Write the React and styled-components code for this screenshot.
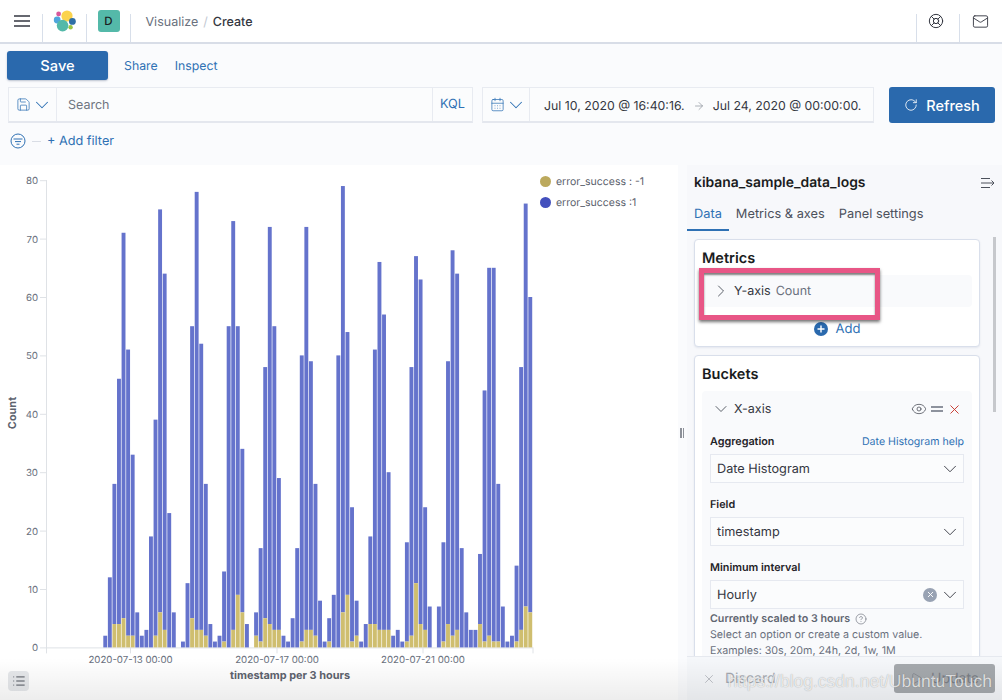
import React from 'react';
import styled, { createGlobalStyle } from 'styled-components';
import {
  ArrowRight, CalendarDays, ChevronDown, ChevronRight, CircleHelp, Eye, LifeBuoy, List, Mail, Play, RotateCw, Save, X,
} from 'lucide-react';

const GlobalStyle = createGlobalStyle`
  html, body {
    margin: 0;
    padding: 0;
    overflow: hidden;
    background: #fff;
    font-family: Inter, "Noto Sans", sans-serif;
    color: #343741;
    text-rendering: geometricPrecision;
  }
  * { box-sizing: border-box; }
`;

const blue = '#2f71b4';

const totals = [
  2, 12, 28, 46, 71, 51, 33, 6, 2, 3, 19, 39, 75, 64, 23, 6, 0, 1, 11, 55,
  78, 52, 28, 4, 1, 2, 13, 55, 73, 55, 34, 4, 0, 6, 17, 48, 72, 55, 29, 2,
  1, 5, 17, 50, 72, 49, 28, 8, 1, 5, 9, 50, 79, 54, 24, 8, 1, 4, 19, 51,
  66, 57, 30, 2, 3, 1, 18, 48, 67, 63, 24, 7, 0, 7, 18, 49, 68, 64, 17, 6,
  3, 3, 16, 44, 65, 65, 28, 7, 1, 2, 14, 48, 76, 60,
];
const errors = [
  0, 0, 4, 4, 5, 2, 2, 0, 0, 0, 0, 2, 6, 3, 0, 0, 0, 0, 0, 5,
  3, 3, 2, 0, 0, 0, 1, 0, 3, 9, 6, 0, 0, 2, 1, 5, 4, 3, 3, 0,
  0, 0, 0, 1, 3, 3, 2, 0, 0, 1, 0, 0, 6, 9, 1, 2, 0, 0, 4, 4,
  3, 3, 3, 0, 0, 0, 1, 2, 11, 4, 3, 0, 0, 0, 1, 4, 2, 3, 0, 0,
  0, 0, 4, 1, 2, 1, 1, 0, 0, 0, 1, 3, 7, 6,
];

const ZERO_Y = 482.4;
const UNIT = 5.84;
const BAR_LEFT = 103.3;
const BAR_STEP = 4.57;

const Page = styled.div`
  position: relative;
  width: 1002px;
  height: 700px;
  overflow: hidden;
  display: flex;
  flex-direction: column;
`;

const Header = styled.header`
  height: 44px;
  flex: none;
  display: flex;
  background: #fff;
  border-bottom: 2px solid #d8dde7;
`;

const HeaderCell = styled.div`
  width: ${(p) => p.$width}px;
  flex: none;
  display: flex;
  align-items: center;
  justify-content: center;
  padding-right: ${(p) => p.$inset || 0}px;
  color: #343741;
  position: relative;
  &::after {
    content: '';
    position: absolute;
    ${(p) => (p.$left ? 'left: 0;' : 'right: 0;')}
    top: 14px;
    bottom: 0;
    width: 1px;
    background: #d8dfea;
  }
`;

const Breadcrumbs = styled.nav`
  flex: 1;
  display: flex;
  align-items: center;
  gap: 5px;
  padding: 2px 0 0 15px;
  font-size: 12.5px;
  color: #69707d;
  span:last-child { color: #343741; font-weight: 500; }
  i { color: #c2c8d2; font-style: normal; }
`;

const Avatar = styled.div`
  width: 22px;
  height: 22px;
  border-radius: 3px;
  background: #54b9a9;
  color: #1a1c21;
  font-size: 11.5px;
  font-weight: 500;
  display: grid;
  place-items: center;
`;

const TopBar = styled.section`
  height: 121px;
  flex: none;
  background: #fafbfd;
  padding: 7px 7px 0;
`;

const ActionRow = styled.div`
  display: flex;
  align-items: center;
  height: 29px;
`;

const SaveButton = styled.button`
  width: 101px;
  height: 29px;
  border: 0;
  border-radius: 3px;
  background: #2a69ad;
  color: #fff;
  font: 500 14.7px Inter, sans-serif;
  box-shadow: 0 1px 2px rgba(40, 60, 100, .3);
`;

const TextLink = styled.a`
  color: ${blue};
  font-size: 12.3px;
  margin: 0 0 0 ${(p) => p.$gap}px;
`;

const SearchRow = styled.div`
  display: flex;
  align-items: center;
  margin: 7px 0 0 1px;
`;

const FieldGroup = styled.div`
  height: 36px;
  width: ${(p) => p.$width}px;
  margin-right: ${(p) => p.$gap}px;
  display: flex;
  background: #fbfcfd;
  border: 1px solid #e8ebf1;
  border-bottom: 2px solid #e4e7ee;
`;

const Addon = styled.div`
  width: ${(p) => p.$width}px;
  flex: none;
  display: flex;
  align-items: center;
  justify-content: center;
  padding-left: ${(p) => p.$inset || 0}px;
  color: ${blue};
  font-size: 12.7px;
  border-${(p) => p.$side || 'right'}: 1px solid #e8ebf1;
`;

const SearchText = styled.div`
  flex: 1;
  display: flex;
  align-items: center;
  padding: 2px 0 0 11px;
  font-size: 12.5px;
  color: #6f7580;
`;

const DateRange = styled.div`
  flex: 1;
  display: flex;
  align-items: center;
  padding: 2px 0 0 14px;
  font-size: 12.3px;
  color: #343741;
  white-space: nowrap;
  svg { margin: 0 8px; color: #8a8f98; }
`;

const RefreshButton = styled.button`
  width: 106px;
  height: 36px;
  border: 0;
  border-radius: 3px;
  background: #2a69ad;
  color: #fff;
  font: 500 14.5px Inter, sans-serif;
  display: flex;
  align-items: center;
  justify-content: center;
  gap: 8px;
`;

const FilterRow = styled.div`
  display: flex;
  align-items: center;
  height: 20px;
  margin: 8px 0 0 3px;
  color: ${blue};
  font-size: 12.7px;
  i { width: 9px; height: 1px; background: #d9dde5; margin: 0 6px 0 6px; }
`;

const Main = styled.main`
  flex: 1;
  display: flex;
  min-height: 0;
`;

const ChartPane = styled.div`
  position: relative;
  width: 678px;
  flex: none;
  background: #fff;
  svg { display: block; }
  text { font-family: Inter, sans-serif; fill: #69707d; font-size: 9.700px; }
  text.title { font-size: 10.900px; font-weight: 700; fill: #5d636e; }
`;

const Legend = styled.ul`
  position: absolute;
  left: 540px;
  top: 6px;
  margin: 0;
  padding: 0;
  list-style: none;
  font-size: 10.500px;
  color: #5b616c;
  li { display: flex; align-items: center; height: 21px; gap: 5px; }
`;

const Dot = styled.span`
  width: 11px;
  height: 11px;
  border-radius: 50%;
  background: ${(p) => p.$color};
`;

const ListToggle = styled.div`
  position: absolute;
  left: 8px;
  bottom: 9px;
  width: 21px;
  height: 20px;
  border-radius: 4px;
  background: #e6e8eb;
  color: #454a54;
  display: grid;
  place-items: center;
`;

const ResizeHandle = styled.div`
  width: 9px;
  flex: none;
  background: #fafbfd;
  display: flex;
  align-items: center;
  gap: 1px;
  padding-left: 2px;
  i { width: 1.500px; height: 10px; background: #8d9199; }
`;

const SidePanel = styled.aside`
  position: relative;
  flex: 1;
  min-width: 0;
  background: #f7f8fb;
  display: flex;
  flex-direction: column;
`;

const PanelTitle = styled.div`
  height: 33px;
  flex: none;
  display: flex;
  align-items: center;
  justify-content: space-between;
  padding: 2px 7px 0;
  font-size: 13.900px;
  font-weight: 600;
  color: #1a1c21;
`;

const Tabs = styled.div`
  flex: none;
  display: flex;
  height: 33px;
`;

const Tab = styled.div`
  height: 33px;
  padding: 9px 7px 0;
  font-size: 12.800px;
  color: ${(p) => (p.$active ? blue : '#4c515b')};
  border-bottom: 2px solid ${(p) => (p.$active ? blue : 'transparent')};
`;

const PanelBody = styled.div`
  flex: 1;
  min-height: 0;
  overflow: hidden;
  padding: 8px 0 0 7px;
`;

const Card = styled.section`
  width: 286px;
  background: #fff;
  border: 1px solid #d9dfeb;
  border-radius: 4px;
  padding: 7px;
  margin-bottom: 8px;
  box-shadow: 0 1px 2px rgba(90, 110, 150, .12);
`;

const CardTitle = styled.h3`
  margin: 0;
  height: 28px;
  font-size: 14.500px;
  font-weight: 600;
  line-height: 24px;
  color: #1a1c21;
`;

const Row = styled.div`
  position: relative;
  background: #f9fafc;
  border-radius: 4px;
  padding: 0 8px;
`;

const RowHead = styled.div`
  height: ${(p) => p.$height}px;
  margin-bottom: ${(p) => p.$after || 0}px;
  display: flex;
  align-items: center;
  font-size: 12.500px;
  color: #4c515b;
  b { font-weight: 400; color: #343741; }
  em { font-style: normal; color: #69707d; margin-left: 5px; }
`;

const RowChevron = styled.span`
  width: 20px;
  margin: 0 3px 0 1px;
  display: grid;
  place-items: center;
  color: #4c515b;
`;

const RowActions = styled.div`
  margin-left: auto;
  display: flex;
  align-items: center;
  gap: 3px;
  padding-right: 2px;
`;

const Highlight = styled.div`
  position: absolute;
  left: -3px;
  top: -7px;
  width: 181px;
  height: 52px;
  border: 5px solid #e85686;
  box-shadow: 0 2px 3px rgba(0, 0, 0, .55), inset 0 2px 2px rgba(0, 0, 0, .5);
`;

const AddRow = styled.div`
  height: 22px;
  margin-top: 10px;
  padding-top: 1px;
  display: flex;
  align-items: center;
  justify-content: center;
  gap: 8px;
  color: ${blue};
  font-size: 13px;
`;

const LabelRow = styled.div`
  height: 18px;
  margin-bottom: 4px;
  display: flex;
  justify-content: space-between;
  align-items: center;
  font-size: 10.800px;
  font-weight: 600;
  color: #1f2228;
  a { color: ${blue}; font-weight: 400; font-size: 10.600px; }
`;

const Select = styled.div`
  height: 29px;
  margin-bottom: 12px;
  display: flex;
  align-items: center;
  padding: 0 2px 0 6px;
  background: #fbfcfd;
  border: 1px solid #e6e9f0;
  font-size: 12.700px;
  color: #343741;
  span { flex: 1; padding-top: 1px; }
`;

const ClearBadge = styled.div`
  width: 14px;
  height: 14px;
  border-radius: 50%;
  background: #98a2b3;
  color: #fff;
  display: grid;
  place-items: center;
  margin-right: 2px;
`;

const Helper = styled.div`
  margin-top: -10px;
  font-size: 10.700px;
  line-height: 16px;
  color: #69707d;
  white-space: nowrap;
  strong { display: flex; align-items: center; gap: 5px; font-weight: 600; color: #5f6570; }
`;

const BottomBar = styled.footer`
  height: 44px;
  flex: none;
  background: #f5f7fa;
  border-top: 1px solid #e6e9ef;
  display: flex;
  align-items: center;
  justify-content: space-between;
  padding: 0 7px 0 15px;
`;

const Discard = styled.div`
  display: flex;
  align-items: center;
  gap: 9px;
  font-size: 14px;
  color: #a7abb2;
`;

const UpdateButton = styled.div`
  width: 101px;
  height: 29px;
  border-radius: 3px;
  background: #a5a9ad;
  color: #7b7f86;
  display: flex;
  align-items: center;
  justify-content: center;
  gap: 8px;
  font-size: 14px;
`;

const Scrollbar = styled.div`
  position: absolute;
  right: 6px;
  top: 72px;
  width: 3px;
  height: 175px;
  background: #c6c8cc;
`;

const BottomFade = styled.div`
  position: absolute;
  left: 0;
  right: 0;
  bottom: 0;
  height: 42px;
  pointer-events: none;
  background: linear-gradient(rgba(0, 0, 0, 0), rgba(0, 0, 0, .07));
`;

const Watermark = styled.div`
  position: absolute;
  right: 10px;
  bottom: 8px;
  font: 17.500px "Liberation Sans", sans-serif;
  color: rgba(255, 255, 255, .75);
  text-shadow: 0 0 1px rgba(0, 0, 0, .35);
  white-space: nowrap;
  pointer-events: none;
`;

const HamburgerIcon = () => (
  <svg width="16" height="14" viewBox="0 0 16 14" fill="none" stroke="#343741" strokeWidth="1.600">
    <path d="M0 2h16M0 7h16M0 12h16" />
  </svg>
);

const ElasticLogo = () => (
  <svg width="24" height="24" viewBox="0 0 24 24">
    <circle cx="14" cy="7" r="5.600" fill="#fbd34d" />
    <circle cx="5.600" cy="5" r="2.400" fill="#d8589b" />
    <circle cx="4.200" cy="11" r="3.400" fill="#4ea6dc" />
    <circle cx="9.600" cy="16.600" r="5.800" fill="#54b9a9" />
    <circle cx="19.400" cy="12.400" r="3.400" fill="#2f6fa6" />
    <circle cx="17.600" cy="18.200" r="2.200" fill="#9bc544" />
  </svg>
);

const FilterIcon = () => (
  <svg width="16" height="16" viewBox="0 0 16 16" fill="none" stroke={blue} strokeWidth="1">
    <circle cx="8" cy="8" r="7" />
    <path d="M3.500 6h9M5 8.600h6M6.500 11.200h3" />
  </svg>
);

const CollapseIcon = () => (
  <svg width="14" height="12" viewBox="0 0 14 12" fill="none" stroke="#4c515b" strokeWidth="1">
    <path d="M0 1.500h9M0 6h13M0 10.500h9M10.500 3.500 13 6l-2.500 2.500" />
  </svg>
);

const PlusCircle = () => (
  <svg width="14" height="14" viewBox="0 0 14 14">
    <circle cx="7" cy="7" r="7" fill="#2a69ad" />
    <path d="M7 3.500v7M3.500 7h7" stroke="#fff" strokeWidth="1.400" />
  </svg>
);

const EqualIcon = () => (
  <svg width="14" height="14" viewBox="0 0 14 14" stroke="#69707d" strokeWidth="1.500">
    <path d="M1 5h12M1 9h12" />
  </svg>
);

const yTicks = [0, 10, 20, 30, 40, 50, 60, 70, 80];
const xTicks = [
  { x: 130.5, label: '2020-07-13 00:00' },
  { x: 277, label: '2020-07-17 00:00' },
  { x: 423, label: '2020-07-21 00:00' },
];

const Histogram = () => (
  <svg width="678" height="535" viewBox="0 0 678 535">
    <g stroke="#dfe2e6" strokeWidth="1">
      <path d={`M46.500 15V${ZERO_Y + 6}M46 ${ZERO_Y + 0.5}H533`} fill="none" />
      {yTicks.map((t) => <path key={t} d={`M40 ${ZERO_Y - t * UNIT + 0.5}h6`} />)}
      {xTicks.map((t) => <path key={t.x} d={`M${t.x} ${ZERO_Y}v6`} />)}
      <path d={`M533 ${ZERO_Y}v6`} />
    </g>
    {yTicks.map((t) => (
      <text key={t} x="38" y={ZERO_Y - t * UNIT + 4} textAnchor="end">{t}</text>
    ))}
    {xTicks.map((t) => (
      <text key={t.x} x={t.x} y="497.500" textAnchor="middle">{t.label}</text>
    ))}
    {totals.map((total, i) => (
      <g key={i}>
        <rect x={BAR_LEFT + i * BAR_STEP} y={ZERO_Y - total * UNIT} width="3.900" height={(total - errors[i]) * UNIT} fill="#6573cc" />
        <rect x={BAR_LEFT + i * BAR_STEP} y={ZERO_Y - errors[i] * UNIT} width="3.900" height={errors[i] * UNIT} fill="#cfbe6f" />
      </g>
    ))}
    <text className="title" x="290" y="513.500" textAnchor="middle">timestamp per 3 hours</text>
    <text className="title" transform="translate(16 248) rotate(-90)" textAnchor="middle">Count</text>
  </svg>
);

const SelectChevron = () => <ChevronDown size={22} strokeWidth={1} />;

export default function App() {
  return (
    <Page>
      <GlobalStyle />
      <Header>
        <HeaderCell $width={43}><HamburgerIcon /></HeaderCell>
        <HeaderCell $width={43.500}><ElasticLogo /></HeaderCell>
        <HeaderCell $width={44}><Avatar>D</Avatar></HeaderCell>
        <Breadcrumbs>
          <span>Visualize</span>
          <i>/</i>
          <span>Create</span>
        </Breadcrumbs>
        <HeaderCell $width={43} $left $inset={3}><LifeBuoy size={16} strokeWidth={1.500} /></HeaderCell>
        <HeaderCell $width={43} $left><Mail size={17} strokeWidth={1.300} /></HeaderCell>
      </Header>
      <TopBar>
        <ActionRow>
          <SaveButton>Save</SaveButton>
          <TextLink $gap={16}>Share</TextLink>
          <TextLink $gap={17}>Inspect</TextLink>
        </ActionRow>
        <SearchRow>
          <FieldGroup $width={465} $gap={9}>
            <Addon $width={48} $inset={3}>
              <Save size={15} strokeWidth={1.200} />
              <ChevronDown size={22} strokeWidth={1.100} />
            </Addon>
            <SearchText>Search</SearchText>
            <Addon $width={40} $side="left">KQL</Addon>
          </FieldGroup>
          <FieldGroup $width={392} $gap={15}>
            <Addon $width={47} $inset={4}>
              <CalendarDays size={15} strokeWidth={1.200} />
              <ChevronDown size={22} strokeWidth={1.100} />
            </Addon>
            <DateRange>
              Jul 10, 2020 @ 16:40:16.
              <ArrowRight size={12} strokeWidth={1.400} />
              Jul 24, 2020 @ 00:00:00.
            </DateRange>
          </FieldGroup>
          <RefreshButton>
            <RotateCw size={14} strokeWidth={1.400} />
            Refresh
          </RefreshButton>
        </SearchRow>
        <FilterRow>
          <FilterIcon />
          <i />
          + Add filter
        </FilterRow>
      </TopBar>
      <Main>
        <ChartPane>
          <Histogram />
          <Legend>
            <li><Dot $color="#bca95d" />error_success : -1</li>
            <li><Dot $color="#4350bd" />error_success :1</li>
          </Legend>
          <ListToggle><List size={14} strokeWidth={1.600} /></ListToggle>
        </ChartPane>
        <ResizeHandle><i /><i /></ResizeHandle>
        <SidePanel>
          <PanelTitle>
            kibana_sample_data_logs
            <CollapseIcon />
          </PanelTitle>
          <Tabs>
            <Tab $active>Data</Tab>
            <Tab>Metrics &amp; axes</Tab>
            <Tab>Panel settings</Tab>
          </Tabs>
          <PanelBody>
            <Card>
              <CardTitle>Metrics</CardTitle>
              <Row>
                <RowHead $height={32}>
                  <RowChevron><ChevronRight size={20} strokeWidth={1.100} /></RowChevron>
                  <b>Y-axis</b>
                  <em>Count</em>
                </RowHead>
                <Highlight />
              </Row>
              <AddRow>
                <PlusCircle />
                Add
              </AddRow>
            </Card>
            <Card>
              <CardTitle>Buckets</CardTitle>
              <Row>
                <RowHead $height={36} $after={5}>
                  <RowChevron><ChevronDown size={20} strokeWidth={1.100} /></RowChevron>
                  <b>X-axis</b>
                  <RowActions>
                    <Eye size={16} strokeWidth={1.200} />
                    <EqualIcon />
                    <X size={15} strokeWidth={1.500} color="#c8352b" />
                  </RowActions>
                </RowHead>
                <LabelRow>
                  Aggregation
                  <a>Date Histogram help</a>
                </LabelRow>
                <Select>
                  <span>Date Histogram</span>
                  <SelectChevron />
                </Select>
                <LabelRow>Field</LabelRow>
                <Select>
                  <span>timestamp</span>
                  <SelectChevron />
                </Select>
                <LabelRow>Minimum interval</LabelRow>
                <Select>
                  <span>Hourly</span>
                  <ClearBadge><X size={9} strokeWidth={2.500} /></ClearBadge>
                  <SelectChevron />
                </Select>
                <Helper>
                  <strong>
                    Currently scaled to 3 hours
                    <CircleHelp size={12} strokeWidth={1.200} />
                  </strong>
                  Select an option or create a custom value.
                  <br />
                  Examples: 30s, 20m, 24h, 2d, 1w, 1M
                </Helper>
              </Row>
            </Card>
          </PanelBody>
          <BottomBar>
            <Discard>
              <X size={14} strokeWidth={1.200} />
              Discard
            </Discard>
            <UpdateButton>
              <Play size={13} strokeWidth={1.200} />
              Update
            </UpdateButton>
          </BottomBar>
          <Scrollbar />
        </SidePanel>
      </Main>
      <BottomFade />
      <Watermark>https://blog.csdn.net/UbuntuTouch</Watermark>
    </Page>
  );
}
